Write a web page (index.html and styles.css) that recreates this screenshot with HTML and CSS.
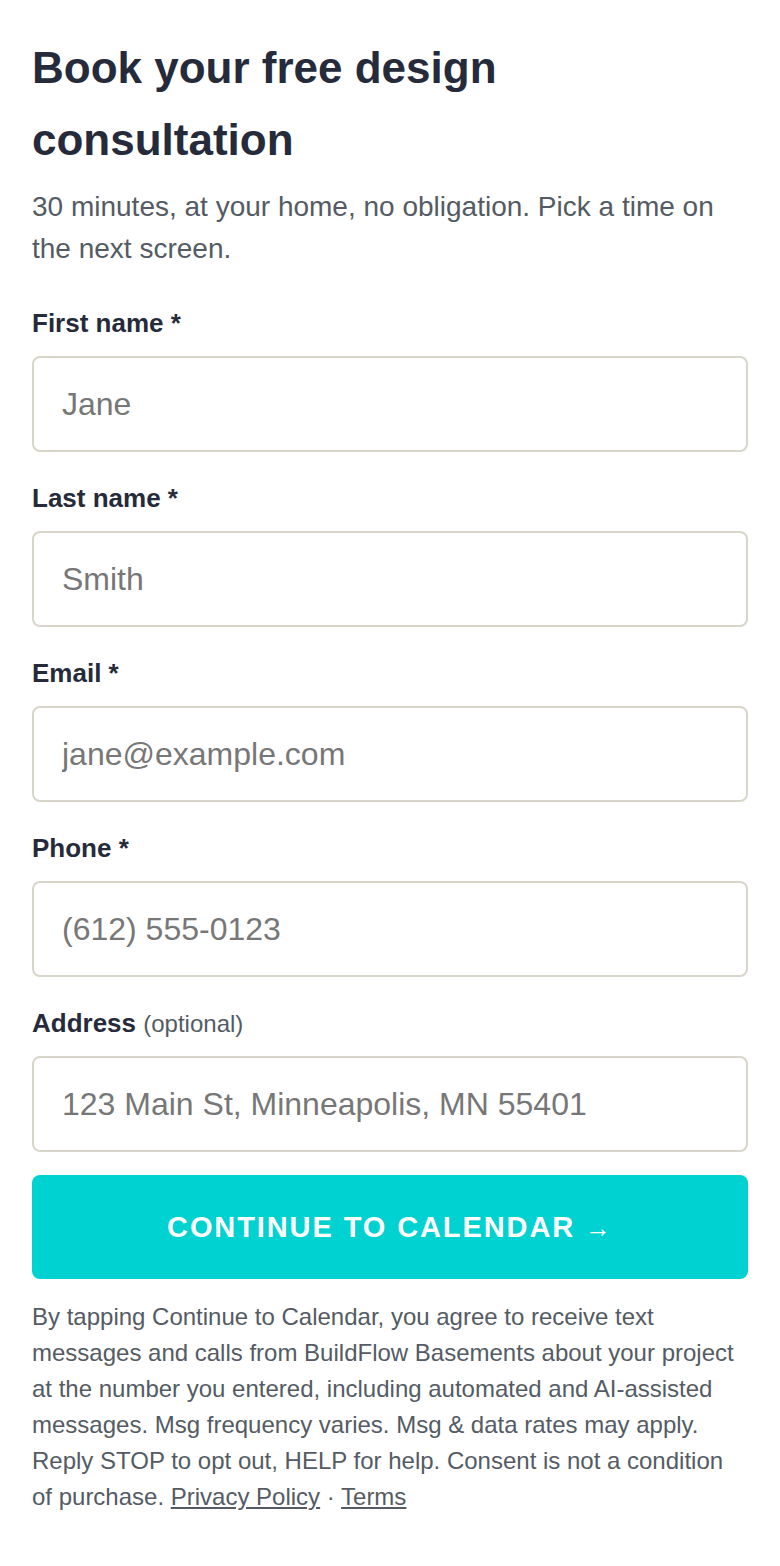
FILE: index.html
```html
<!DOCTYPE html>
<html lang="en">
<head>
<meta charset="utf-8">
<title>Book your free design consultation</title>
<link rel="stylesheet" href="styles.css">
</head>
<body>
<main class="page">
  <h1 class="title">Book your free design consultation</h1>
  <p class="subtitle">30 minutes, at your home, no obligation. Pick a time on the next screen.</p>
  <form class="form">
    <div class="field">
      <label class="label" for="first">First name *</label>
      <input class="input" id="first" type="text" placeholder="Jane">
    </div>
    <div class="field">
      <label class="label" for="last">Last name *</label>
      <input class="input" id="last" type="text" placeholder="Smith">
    </div>
    <div class="field">
      <label class="label" for="email">Email *</label>
      <input class="input" id="email" type="email" placeholder="jane@example.com">
    </div>
    <div class="field">
      <label class="label" for="phone">Phone *</label>
      <input class="input" id="phone" type="tel" placeholder="(612) 555-0123">
    </div>
    <div class="field">
      <label class="label" for="addr">Address <span class="optional">(optional)</span></label>
      <input class="input" id="addr" type="text" placeholder="123 Main St, Minneapolis, MN 55401">
    </div>
    <button class="submit" type="button">CONTINUE TO CALENDAR <span class="arrow">→</span></button>
  </form>
  <p class="legal">By tapping Continue to Calendar, you agree to receive text messages and calls from BuildFlow Basements about your project at the number you entered, including automated and AI-assisted messages. Msg frequency varies. Msg &amp; data rates may apply. Reply STOP to opt out, HELP for help. Consent is not a condition of purchase. <a class="link" href="#">Privacy Policy</a> · <a class="link" href="#">Terms</a></p>
</main>
</body>
</html>
```

FILE: styles.css
```css
* { box-sizing: border-box; }
html, body { margin: 0; padding: 0; background: #ffffff; }
body {
  font-family: "Liberation Sans", Arial, sans-serif;
  color: #262b3b;
}
.page {
  padding: 32px 32px 40px;
}
.title {
  margin: 0 0 10px;
  font-size: 44px;
  line-height: 72px;
  font-weight: 700;
  color: #262b3b;
}
.subtitle {
  margin: 0 0 33px;
  font-size: 28px;
  line-height: 42px;
  color: #545b64;
}
.form {
  display: flex;
  flex-direction: column;
}
.field {
  display: flex;
  flex-direction: column;
  margin-bottom: 26px;
}
.field:last-of-type { margin-bottom: 23px; }
.label {
  font-size: 26px;
  line-height: 41px;
  font-weight: 700;
  color: #262b3b;
  margin-bottom: 12px;
}
.optional {
  font-weight: 400;
  font-size: 24px;
  color: #545b64;
}
.input {
  height: 96px;
  width: 100%;
  padding: 0 28px;
  border: 2px solid #d8d5cb;
  border-radius: 8px;
  background: #ffffff;
  font-family: "Liberation Sans", Arial, sans-serif;
  font-size: 32px;
  color: #262b3b;
  outline: none;
}
.input::placeholder { color: #777777; opacity: 1; }
.submit {
  height: 104px;
  width: 100%;
  border: 0;
  border-radius: 8px;
  background: #00d1d1;
  color: #ffffff;
  font-family: "Liberation Sans", Arial, sans-serif;
  font-size: 29px;
  font-weight: 700;
  letter-spacing: 1.9px;
  cursor: pointer;
}
.arrow {
  font-weight: 400;
  font-size: 26px;
}
.legal {
  margin: 20px 0 0;
  font-size: 24px;
  line-height: 36px;
  color: #545b64;
}
.link {
  color: #545b64;
  text-decoration: underline;
}
```
